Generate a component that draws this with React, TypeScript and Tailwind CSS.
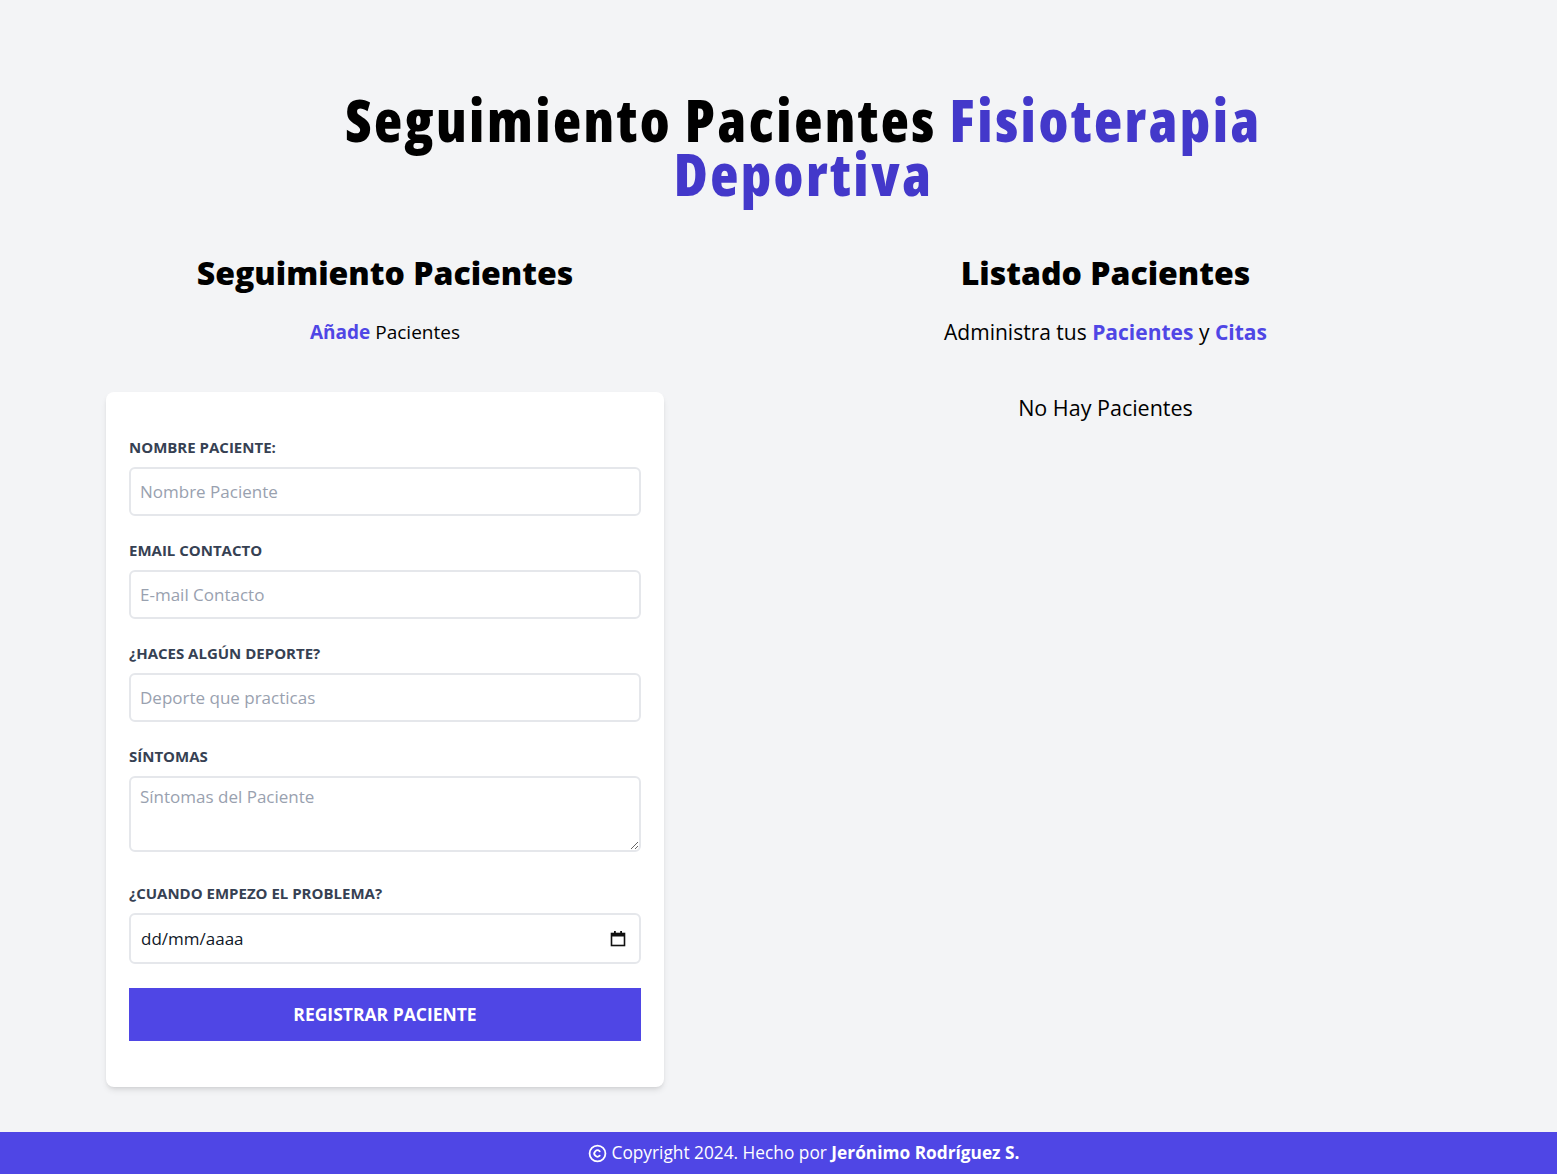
import { Copyright } from 'lucide-react';

const body = "font-['Open_Sans','Noto_Sans',sans-serif]";

function Field({ label, children }: { label: string; children: React.ReactNode }) {
  return (
    <div className="mb-6">
      <label className="block text-[15px] font-bold uppercase leading-5 text-gray-700">{label}</label>
      <div className="mt-[10px]">{children}</div>
    </div>
  );
}

function CalendarIcon() {
  return (
    <svg width="16" height="17" viewBox="0 0 16 17" fill="none">
      <rect x="1.5" y="3.5" width="13" height="12" stroke="#111" strokeWidth="1.6" />
      <rect x="1.5" y="3.5" width="13" height="3" fill="#111" />
      <rect x="4" y="1" width="1.8" height="3" fill="#111" />
      <rect x="10.2" y="1" width="1.8" height="3" fill="#111" />
    </svg>
  );
}

function Formulario() {
  const inputCls =
    'block w-full h-[49px] rounded-md border-2 border-gray-200 bg-white px-[9px] text-[17px] text-gray-900 placeholder-gray-400 outline-none';
  return (
    <form className="rounded-lg bg-white px-[23px] pt-[45px] pb-[46px] shadow-md">
      <Field label="Nombre Paciente:">
        <input type="text" placeholder="Nombre Paciente" className={inputCls} />
      </Field>
      <Field label="Email Contacto">
        <input type="email" placeholder="E-mail Contacto" className={inputCls} />
      </Field>
      <Field label="¿Haces algún deporte?">
        <input type="text" placeholder="Deporte que practicas" className={inputCls} />
      </Field>
      <div className="mb-[31px]">
        <label className="block text-[15px] font-bold uppercase leading-5 text-gray-700">Síntomas</label>
        <textarea
          placeholder="Síntomas del Paciente"
          className="mt-[10px] block h-[76px] w-full rounded-md border-2 border-gray-200 bg-white px-[9px] py-[6px] text-[17px] text-gray-900 placeholder-gray-400 outline-none"
        />
      </div>
      <Field label="¿Cuando empezo el problema?">
        <div className="flex h-[51px] w-full items-center justify-between rounded-md border-2 border-gray-200 bg-white pl-[10px] pr-[13px] text-[17px] text-gray-900">
          <span>dd/mm/aaaa</span>
          <CalendarIcon />
        </div>
      </Field>
      <button
        type="button"
        className="block h-[53px] w-full bg-[#4f46e5] text-[17.5px] font-bold uppercase text-white"
      >
        Registrar Paciente
      </button>
    </form>
  );
}

export default function App() {
  return (
    <div className={`flex min-h-screen flex-col bg-gray-100 ${body}`}>
      <header className="pt-[93px]">
        <h1 className="mx-auto w-2/3 pl-[50px] text-center text-[58px] font-extrabold leading-[54px] tracking-[2.5px] text-black [font-stretch:75%]">
          Seguimiento Pacientes <span className="text-[#4338ca]">Fisioterapia Deportiva</span>
        </h1>
      </header>

      <main className="mt-[54px] flex pl-[106px] pr-[10px] pb-[45px]">
        <div className="w-[558px]">
          <h2 className="text-center text-[32px] font-extrabold leading-9">Seguimiento Pacientes</h2>
          <p className="mt-[27px] mb-[46px] text-center text-[19px] leading-7">
            <span className="font-bold text-[#4f46e5]">Añade</span> Pacientes
          </p>
          <Formulario />
        </div>

        <div className="flex-1">
          <h2 className="text-center text-[32px] font-extrabold leading-9">Listado Pacientes</h2>
          <p className="mt-[27px] text-center text-[21px] leading-7">
            Administra tus <span className="font-bold text-[#4f46e5]">Pacientes</span> y{' '}
            <span className="font-bold text-[#4f46e5]">Citas</span>
          </p>
          <p className="mt-[48px] text-center text-[21.5px] leading-7">No Hay Pacientes</p>
        </div>
      </main>

      <footer className="mt-auto flex h-[42px] items-center justify-center gap-[5px] bg-[#4f46e5] pl-[50px] text-[17.3px] text-white">
        <Copyright size={19} strokeWidth={2.25} />
        <span>
          Copyright 2024. Hecho por <span className="font-bold">Jerónimo Rodríguez S.</span>
        </span>
      </footer>
    </div>
  );
}
